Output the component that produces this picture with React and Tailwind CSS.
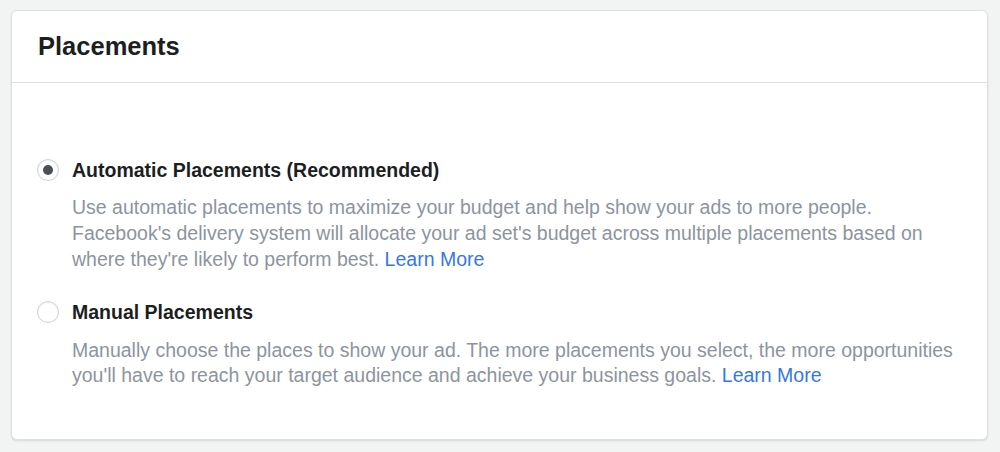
export default function App() {
  return (
    <div className="min-h-screen bg-[#f2f3f3] pt-[10px] pl-[11px] pr-[12px] font-['Liberation_Sans',Arial,sans-serif]">
      <div className="bg-white border border-[#dddfe2] rounded-[6px] shadow-[0_1px_2px_rgba(0,0,0,0.12)] h-[430px]">
        <div className="h-[72px] border-b border-[#dddfe2] flex items-center px-[26px]">
          <h1 className="text-[25.5px] font-bold text-[#1c1e21]">Placements</h1>
        </div>
        <div className="px-[25px] pt-[75px] flex flex-col gap-[28px]">
          <div className="flex gap-[13px]">
            <div className="pt-[1px]">
              <div className="w-[22px] h-[22px] rounded-full border border-[#ccd0d5] shadow-[inset_0_1px_2px_rgba(0,0,0,0.06)] flex items-center justify-center">
                <div className="w-[10px] h-[10px] rounded-full bg-[#4b4f56]" />
              </div>
            </div>
            <div>
              <div className="text-[19.5px] font-bold text-[#1c1e21] leading-[24px]">Automatic Placements (Recommended)</div>
              <p className="mt-[12px] text-[19.5px] leading-[26px] text-[#8d949e] max-w-[890px]">
                Use automatic placements to maximize your budget and help show your ads to more people. Facebook's delivery system will allocate your ad set's budget across multiple placements based on where they're likely to perform best. <span className="text-[#3578e5]">Learn More</span>
              </p>
            </div>
          </div>
          <div className="flex gap-[13px]">
            <div className="pt-[1px]">
              <div className="w-[22px] h-[22px] rounded-full border border-[#ccd0d5] shadow-[inset_0_1px_2px_rgba(0,0,0,0.06)]" />
            </div>
            <div>
              <div className="text-[19.5px] font-bold text-[#1c1e21] leading-[24px]">Manual Placements</div>
              <p className="mt-[14px] text-[19.5px] leading-[25px] text-[#8d949e] max-w-[890px]">
                Manually choose the places to show your ad. The more placements you select, the more opportunities you'll have to reach your target audience and achieve your business goals. <span className="text-[#3578e5]">Learn More</span>
              </p>
            </div>
          </div>
        </div>
      </div>
    </div>
  );
}
